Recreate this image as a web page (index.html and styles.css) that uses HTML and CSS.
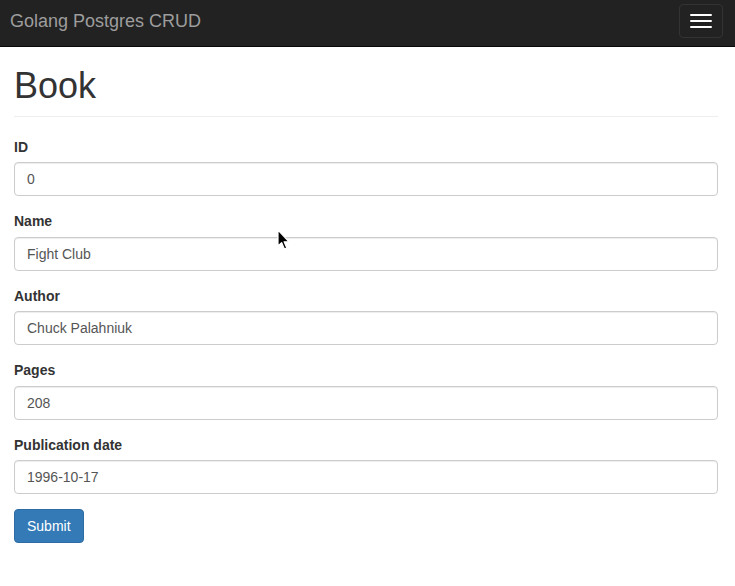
FILE: index.html
```html
<!DOCTYPE html>
<html lang="en">
<head>
<meta charset="utf-8">
<title>Golang Postgres CRUD</title>
<link rel="stylesheet" href="styles.css">
</head>
<body>
<nav class="navbar">
  <a class="brand" href="#">Golang Postgres CRUD</a>
  <button class="toggle" type="button" aria-label="Toggle navigation">
    <span class="bar"></span>
    <span class="bar"></span>
    <span class="bar"></span>
  </button>
</nav>
<main class="container">
  <h1 class="page-header">Book</h1>
  <form class="form">
    <div class="form-group">
      <label class="label">ID</label>
      <input class="input" type="text" value="0">
    </div>
    <div class="form-group">
      <label class="label">Name</label>
      <input class="input" type="text" value="Fight Club">
    </div>
    <div class="form-group">
      <label class="label">Author</label>
      <input class="input" type="text" value="Chuck Palahniuk">
    </div>
    <div class="form-group">
      <label class="label">Pages</label>
      <input class="input" type="text" value="208">
    </div>
    <div class="form-group">
      <label class="label">Publication date</label>
      <input class="input" type="text" value="1996-10-17">
    </div>
    <button class="btn" type="submit">Submit</button>
  </form>
</main>
<svg class="cursor" width="14" height="22" viewBox="0 0 14 22" aria-hidden="true">
  <path d="M1 1 L1 17 L4.6 13.6 L7.4 20 L9.8 19 L7.1 12.8 L12 12.8 Z" fill="#000" stroke="#fff" stroke-width="1.2" stroke-linejoin="round"/>
</svg>
</body>
</html>
```
FILE: styles.css
```css
* { box-sizing: border-box; }
html, body {
  margin: 0;
  padding: 0;
  background: #fff;
}
body {
  font-family: "Liberation Sans", Arial, sans-serif;
  font-size: 14px;
  line-height: 20px;
  color: #333;
  position: relative;
  min-height: 586px;
}
.navbar {
  height: 47px;
  background: #222;
  border-bottom: 1px solid #080808;
  display: flex;
  align-items: center;
  justify-content: space-between;
  padding: 0 12px 0 10px;
}
.brand {
  color: #9d9d9d;
  font-size: 18px;
  line-height: 20px;
  text-decoration: none;
  margin-top: -4px;
}
.toggle {
  width: 44px;
  height: 34px;
  margin-top: -4px;
  border: 1px solid #333;
  border-radius: 4px;
  background: transparent;
  padding: 0;
  display: flex;
  flex-direction: column;
  align-items: center;
  justify-content: center;
  gap: 4px;
}
.bar {
  display: block;
  width: 22px;
  height: 2px;
  background: #fff;
  border-radius: 1px;
}
.container {
  padding: 0 17px 40px 14px;
}
.page-header {
  margin: 19px 0 20px;
  padding-bottom: 9.5px;
  border-bottom: 1px solid #eee;
  font-size: 36px;
  font-weight: 500;
  line-height: 40px;
  color: #333;
}
.form-group {
  margin-bottom: 15px;
}
.label {
  display: block;
  font-weight: bold;
  margin-bottom: 5.5px;
}
.input {
  display: block;
  width: 100%;
  height: 34px;
  padding: 6px 12px;
  font-family: inherit;
  font-size: 14px;
  line-height: 20px;
  color: #555;
  background: #fff;
  border: 1px solid #ccc;
  border-radius: 4px;
  box-shadow: inset 0 1px 1px rgba(0,0,0,.075);
  outline: none;
}
.btn {
  display: inline-block;
  height: 34px;
  padding: 6px 12px;
  font-family: inherit;
  font-size: 14px;
  line-height: 20px;
  color: #fff;
  background: #337ab7;
  border: 1px solid #2e6da4;
  border-radius: 4px;
  cursor: pointer;
}
.cursor {
  position: absolute;
  left: 277px;
  top: 229px;
}
```
